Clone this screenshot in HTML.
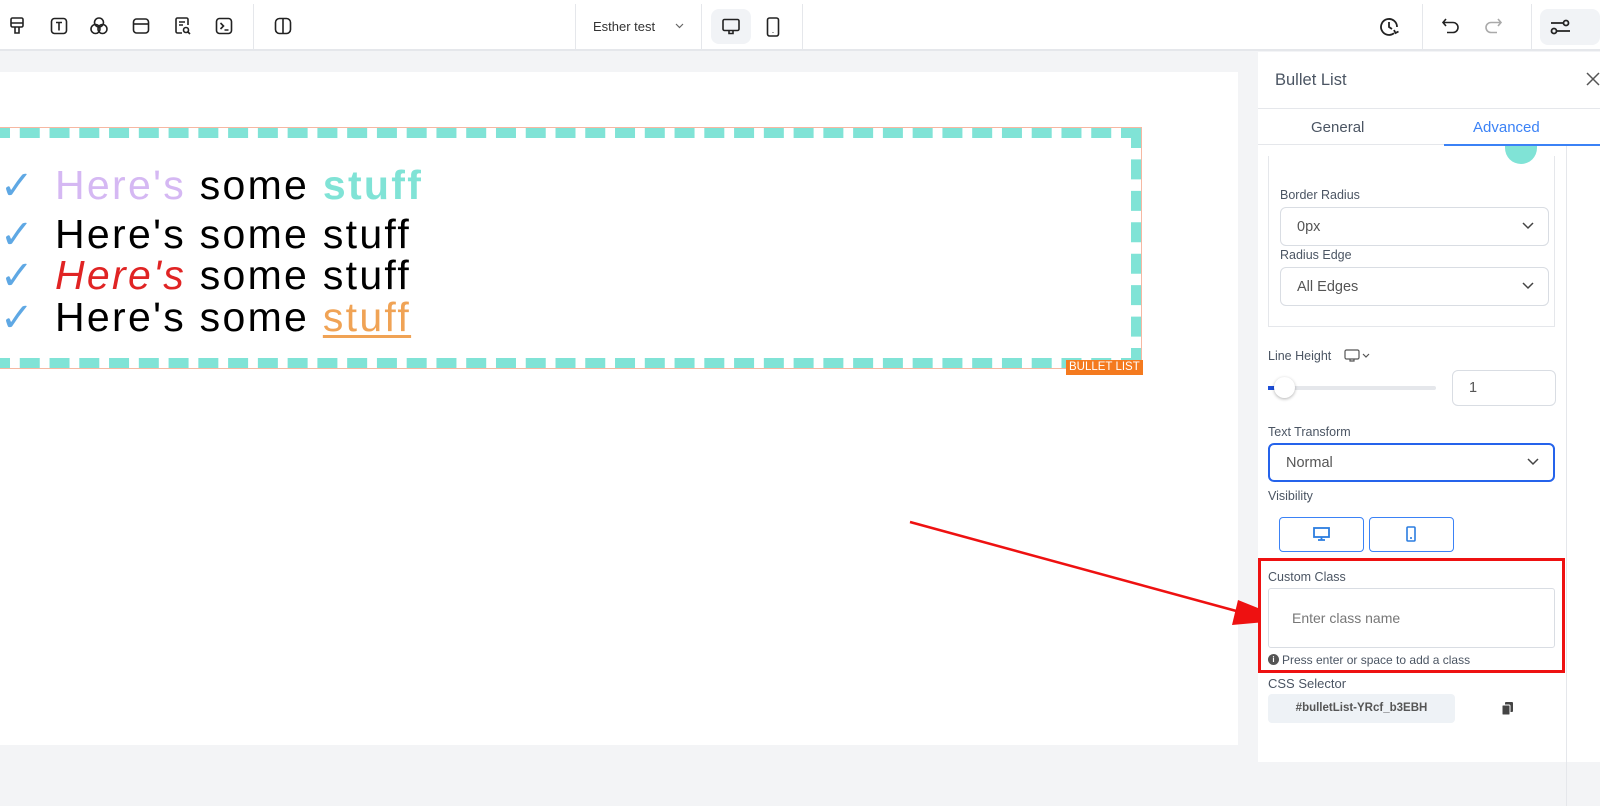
<!DOCTYPE html>
<html><head><meta charset="utf-8"><style>
*{box-sizing:border-box;margin:0;padding:0}
body{width:1600px;height:762px;overflow:hidden;background:#f3f4f6;font-family:"Liberation Sans",sans-serif;position:relative}
.a{position:absolute}
.top{left:0;top:0;width:1600px;height:51px;background:#fff;border-bottom:2px solid #e5e7eb}
.vs{position:absolute;top:4px;width:1px;height:46px;background:#e5e7eb}
.ic{position:absolute;top:16px}
.page{left:0;top:72px;width:1238px;height:673px;background:#fff}
.box{left:-10px;top:128px;width:1151px;height:240px;border:10px dashed #80e3d6;outline:1px solid #f6b8a2}
.li{position:absolute;left:0;font-size:41px;color:#000;white-space:nowrap;letter-spacing:2.3px}
.ck{color:#5fa8e4;display:inline-block;width:55px;font-size:40px;letter-spacing:0}
.panel{left:1258px;top:52px;width:342px;height:710px;background:#fff}
.lbl{position:absolute;font-size:12.5px;color:#4b5563}
.sel{position:absolute;border:1px solid #d9dde3;border-radius:6px;background:#fff;font-size:14.5px;color:#555;padding-left:16px;display:flex;align-items:center}
.chev{position:absolute;right:14px;top:50%;margin-top:-5px}
</style></head><body>
<div class="a top">
<svg class="ic" style="left:7px" width="20" height="20" viewBox="0 0 20 20" fill="none" stroke="#222" stroke-width="1.6"><rect x="4" y="2" width="12" height="9" rx="1.5"/><path d="M4 7h12M8 11v6h4v-6"/></svg>
<svg class="ic" style="left:49px" width="20" height="20" viewBox="0 0 20 20" fill="none" stroke="#222" stroke-width="1.6"><rect x="2.5" y="2.5" width="15" height="15" rx="3"/><path d="M7 6.5h6M10 6.5v8"/></svg>
<svg class="ic" style="left:89px" width="20" height="20" viewBox="0 0 20 20" fill="none" stroke="#222" stroke-width="1.6"><circle cx="10" cy="6.5" r="4.5"/><circle cx="6.5" cy="13" r="4.5"/><circle cx="13.5" cy="13" r="4.5"/></svg>
<svg class="ic" style="left:131px" width="20" height="20" viewBox="0 0 20 20" fill="none" stroke="#222" stroke-width="1.6"><rect x="2.5" y="3" width="15" height="14" rx="3"/><path d="M2.5 8h15"/></svg>
<svg class="ic" style="left:173px" width="20" height="20" viewBox="0 0 20 20" fill="none" stroke="#222" stroke-width="1.6"><path d="M9 17H4.5a1.5 1.5 0 0 1-1.5-1.5v-12A1.5 1.5 0 0 1 4.5 2h9A1.5 1.5 0 0 1 15 3.5V9M6 6h6M6 9h4"/><circle cx="13" cy="14" r="2.5"/><path d="M15 16l2 2"/></svg>
<svg class="ic" style="left:214px" width="20" height="20" viewBox="0 0 20 20" fill="none" stroke="#222" stroke-width="1.6"><rect x="2.5" y="2.5" width="15" height="15" rx="3"/><path d="M6.5 7l3 3-3 3M10.5 14h4"/></svg>
<div class="vs" style="left:253px"></div>
<svg class="ic" style="left:273px" width="20" height="20" viewBox="0 0 20 20" fill="none" stroke="#222" stroke-width="1.6"><rect x="2.5" y="2.5" width="15" height="15" rx="4"/><path d="M10 2.5v15"/></svg>
<div class="vs" style="left:575px"></div>
<div class="a" style="left:593px;top:19px;font-size:13px;color:#333">Esther test</div>
<svg class="a" style="left:675px;top:23px" width="9" height="6" viewBox="0 0 9 6" fill="none" stroke="#666" stroke-width="1.2"><path d="M1 1l3.5 3.5L8 1"/></svg>
<div class="vs" style="left:701px"></div>
<div class="a" style="left:711px;top:9px;width:40px;height:35px;background:#f1f3f6;border-radius:8px"></div>
<svg class="ic" style="left:721px;top:17px" width="20" height="20" viewBox="0 0 20 20" fill="none" stroke="#222" stroke-width="1.6"><rect x="2" y="2.5" width="16" height="11" rx="1.5"/><path d="M8 13.5v3h4v-3"/></svg>
<svg class="ic" style="left:763px;top:16px" width="20" height="22" viewBox="0 0 20 22" fill="none" stroke="#222" stroke-width="1.6"><rect x="4.5" y="2" width="11" height="18" rx="2"/><path d="M10 16.5v.5"/></svg>
<div class="vs" style="left:802px"></div>
<svg class="ic" style="left:1378px;top:16px" width="22" height="22" viewBox="0 0 22 22" fill="none" stroke="#222" stroke-width="1.8"><path d="M19 11a8 8 0 1 0-3 6.2"/><path d="M11 6v5l3 2M16 14l1.5 3 3-1.5"/></svg>
<div class="vs" style="left:1422px"></div>
<svg class="ic" style="left:1441px;top:17px" width="20" height="18" viewBox="0 0 20 18" fill="none" stroke="#222" stroke-width="1.6"><path d="M5 2L2 5.5 5 9M2 5.5h10a5 5 0 0 1 0 10H6"/></svg>
<svg class="ic" style="left:1483px;top:17px" width="20" height="18" viewBox="0 0 20 18" fill="none" stroke="#aaa" stroke-width="1.6"><path d="M15 2l3 3.5-3 3.5M18 5.5H8a5 5 0 0 0 0 10h6"/></svg>
<div class="vs" style="left:1531px"></div>
<div class="a" style="left:1540px;top:9px;width:60px;height:36px;background:#f1f3f6;border-radius:8px"></div>
<svg class="ic" style="left:1550px;top:18px" width="20" height="18" viewBox="0 0 20 18" fill="none" stroke="#222" stroke-width="1.8"><path d="M1 5h12M7 13h13"/><circle cx="16" cy="5" r="2.5"/><circle cx="4" cy="13" r="2.5"/></svg>
</div>

<div class="a page"></div>
<div class="a box"></div>
<div class="a" style="left:1066px;top:360px;background:#f47a1f;color:#fff;font-size:11.5px;padding:1px 3px;line-height:13px">BULLET LIST</div>
<div class="li" style="top:162px"><span class="ck">✓</span><span style="color:#d5b8f3">Here's</span> some <b style="color:#80e3d6">stuff</b></div>
<div class="li" style="top:211px"><span class="ck">✓</span>Here's some stuff</div>
<div class="li" style="top:252px"><span class="ck">✓</span><i style="color:#e02424">Here's</i> some stuff</div>
<div class="li" style="top:294px"><span class="ck">✓</span>Here's some <span style="color:#f0a355;text-decoration:underline;text-decoration-thickness:3px;text-underline-offset:4px">stuff</span></div>

<svg class="a" style="left:0;top:0" width="1600" height="762"><line x1="910" y1="522" x2="1240" y2="612" stroke="#e11" stroke-width="2.5"/><path d="M1288 620L1238 600 1232 625z" fill="#e11"/></svg>

<div class="a panel">
<div class="a" style="left:17px;top:19px;font-size:16.5px;color:#4b5563">Bullet List</div>
<svg class="a" style="left:328px;top:20px" width="14" height="14" viewBox="0 0 14 14" stroke="#555" stroke-width="1.5"><path d="M1 1l12 12M13 1L1 13"/></svg>
<div class="a" style="left:0;top:56px;width:342px;height:1px;background:#e5e7eb"></div>
<div class="a" style="left:53px;top:67px;font-size:15px;color:#4b5563">General</div>
<div class="a" style="left:215px;top:67px;font-size:15px;color:#3b82f6">Advanced</div>
<div class="a" style="left:0;top:92px;width:342px;height:1px;background:#e5e7eb"></div>
<div class="a" style="left:186px;top:92px;width:156px;height:2px;background:#3b82f6"></div>
<div class="a" style="left:308px;top:94px;width:1px;height:660px;background:#e5e7eb"></div>
<div class="a" style="left:10px;top:104px;width:287px;height:171px;border:1px solid #e5e7eb;border-top:none"></div>
<div class="a" style="left:247px;top:94px;width:32px;height:18px;background:#80e3d6;border-radius:0 0 16px 16px"></div>
<div class="lbl" style="left:22px;top:136px">Border Radius</div>
<div class="sel" style="left:22px;top:155px;width:269px;height:39px">0px<svg class="chev" width="12" height="8" viewBox="0 0 12 8" fill="none" stroke="#444" stroke-width="1.5"><path d="M1 1l5 5 5-5"/></svg></div>
<div class="lbl" style="left:22px;top:196px">Radius Edge</div>
<div class="sel" style="left:22px;top:215px;width:269px;height:39px">All Edges<svg class="chev" width="12" height="8" viewBox="0 0 12 8" fill="none" stroke="#444" stroke-width="1.5"><path d="M1 1l5 5 5-5"/></svg></div>
<div class="lbl" style="left:10px;top:297px">Line Height</div>
<svg class="a" style="left:86px;top:297px" width="28" height="14" viewBox="0 0 28 14" fill="none" stroke="#555" stroke-width="1.2"><rect x="1" y="1" width="14" height="9" rx="1.5"/><path d="M6 10v2h4v-2M19 5l3 3 3-3"/></svg>
<div class="a" style="left:10px;top:334px;width:168px;height:4px;background:#e5e7eb;border-radius:2px"></div>
<div class="a" style="left:10px;top:334px;width:10px;height:4px;background:#1d4ed8"></div>
<div class="a" style="left:16px;top:325px;width:21px;height:21px;background:#fff;border-radius:50%;box-shadow:0 1px 3px rgba(0,0,0,.3)"></div>
<div class="sel" style="left:194px;top:318px;width:104px;height:36px">1</div>
<div class="lbl" style="left:10px;top:373px">Text Transform</div>
<div class="sel" style="left:10px;top:391px;width:287px;height:39px;border:2px solid #2563eb;border-radius:6px">Normal<svg class="chev" width="12" height="8" viewBox="0 0 12 8" fill="none" stroke="#444" stroke-width="1.5"><path d="M1 1l5 5 5-5"/></svg></div>
<div class="lbl" style="left:10px;top:437px">Visibility</div>
<div class="a" style="left:21px;top:465px;width:85px;height:35px;border:1px solid #3b82f6;border-radius:4px"></div>
<svg class="a" style="left:55px;top:475px" width="17" height="14" viewBox="0 0 17 14" fill="none" stroke="#2b7de0" stroke-width="1.8"><rect x="1" y="1" width="15" height="9"/><path d="M5 13h7M8.5 10v3"/></svg>
<div class="a" style="left:111px;top:465px;width:85px;height:35px;border:1px solid #3b82f6;border-radius:4px"></div>
<svg class="a" style="left:148px;top:474px" width="10" height="16" viewBox="0 0 10 16" fill="none" stroke="#2b7de0" stroke-width="1.6"><rect x="1" y="1" width="8" height="14" rx="1"/><path d="M4 12h2"/></svg>
<div class="a" style="left:0;top:506px;width:307px;height:115px;border:3px solid #e11"></div>
<div class="lbl" style="left:10px;top:518px">Custom Class</div>
<div class="a" style="left:10px;top:536px;width:287px;height:60px;border:1px solid #d9dde3;border-radius:3px"></div>
<div class="a" style="left:34px;top:558px;font-size:14px;color:#777">Enter class name</div>
<div class="a" style="left:10px;top:602px;width:11px;height:11px;border-radius:50%;background:#555;color:#fff;font-size:8px;text-align:center;line-height:11px;font-weight:bold">i</div>
<div class="lbl" style="left:24px;top:601px;font-size:12px">Press enter or space to add a class</div>
<div class="lbl" style="left:10px;top:624px;font-size:13px">CSS Selector</div>
<div class="a" style="left:10px;top:642px;width:187px;height:29px;background:#eef2f6;border-radius:4px;font-size:11.5px;color:#555;font-weight:bold;text-align:center;line-height:29px">#bulletList-YRcf_b3EBH</div>
<svg class="a" style="left:244px;top:650px" width="12" height="13" viewBox="0 0 12 13" fill="#444"><rect x="3" y="0" width="8" height="10" rx="1"/><rect x="0" y="3" width="8" height="10" rx="1" stroke="#fff" stroke-width="1"/></svg>
</div>
</body></html>
